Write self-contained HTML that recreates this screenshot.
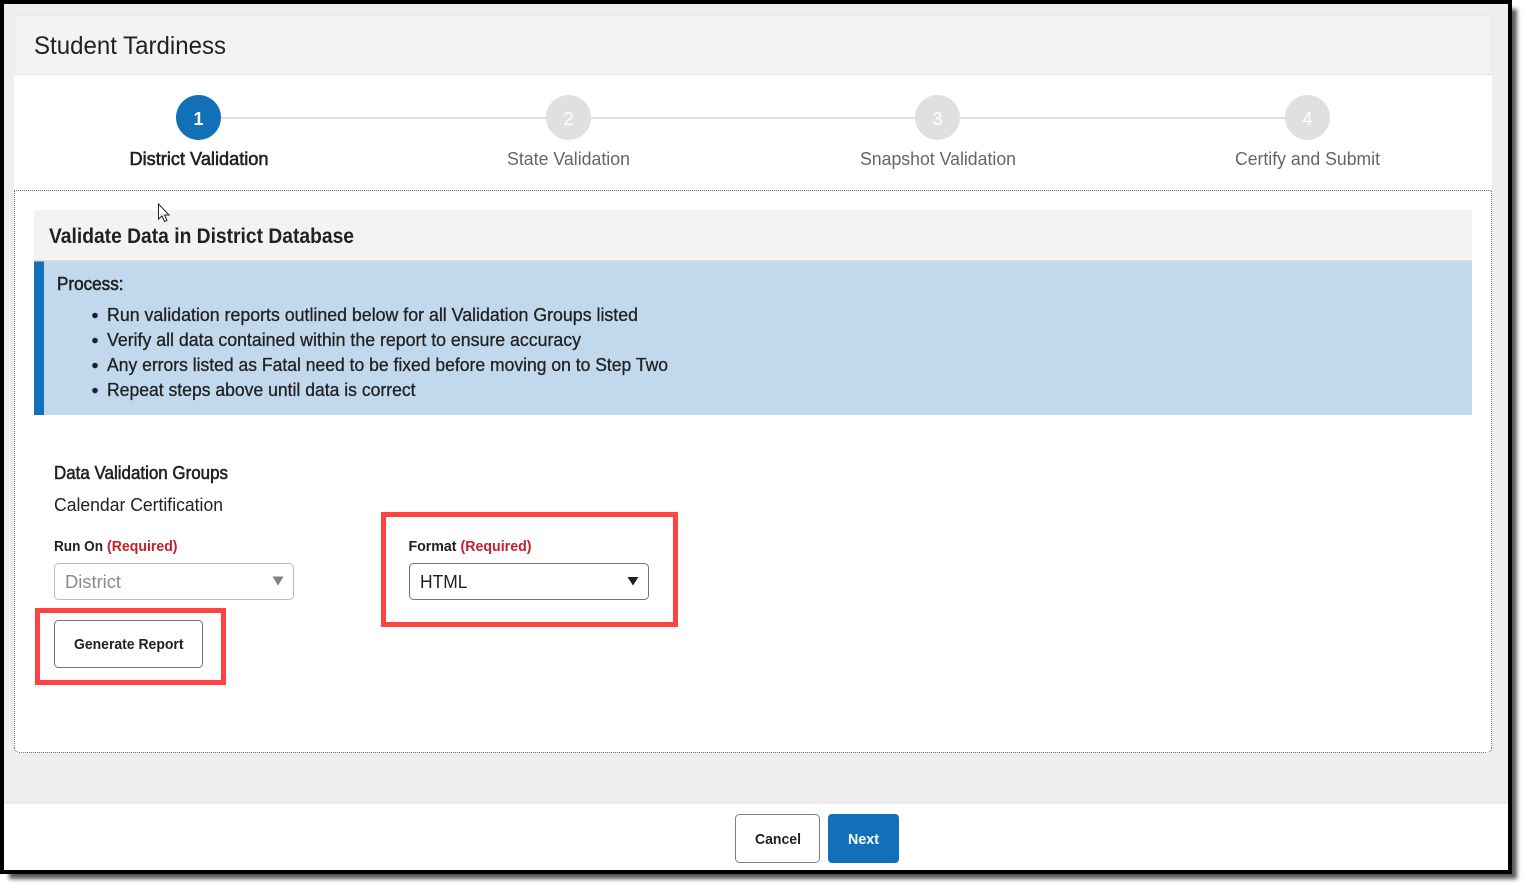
<!DOCTYPE html>
<html><head><meta charset="utf-8"><style>
html,body{margin:0;padding:0;background:#fff;width:1527px;height:889px;overflow:hidden}
svg{display:block}
text{font-family:"Liberation Sans",sans-serif;fill:#212121}
.b{font-weight:bold}
.g{fill:#666}
.r{fill:#c4202c}
.m{stroke:#212121;stroke-width:.55px}
.l{stroke:#212121;stroke-width:.28px}
.d{fill:none;stroke:#777;stroke-width:1;stroke-dasharray:1 1}
</style></head><body>
<svg width="1527" height="889" viewBox="0 0 1527 889" xmlns="http://www.w3.org/2000/svg">
<defs><filter id="s" x="-2%" y="-2%" width="104%" height="104%"><feGaussianBlur stdDeviation="2"/></filter></defs>
<rect x="9" y="9" width="1508" height="870" fill="#000" opacity=".65" filter="url(#s)"/>
<rect x="0" y="0" width="1512" height="874" fill="#000"/>
<rect x="4" y="4" width="1504" height="866" fill="#eeeeee"/>
<rect x="4" y="803" width="1504" height="67" fill="#fff"/>
<rect x="4" y="802.500" width="1504" height="1" fill="#e2e2e2"/>
<path d="M14.500 190.500V748a4 4 0 0 0 4 4H1487.500a4 4 0 0 0 4-4V190.500Z" fill="#fff"/>
<path class="d" d="M14 190.500H1492"/>
<path class="d" d="M14.500 191V748"/>
<path class="d" d="M1491.500 191V748"/>
<path class="d" d="M19 752.500H1487"/>
<path d="M14.500 748a4 4 0 0 0 4 4M1491.500 748a4 4 0 0 1-4 4" fill="none" stroke="#777" stroke-width="1" stroke-dasharray="1 1"/>
<path d="M14.500 74V19a4 4 0 0 1 4-4H1487.500a4 4 0 0 1 4 4V74" fill="#f3f3f3" stroke="#e6e6e6" stroke-width="1"/>
<rect x="14" y="75" width="1478" height="115" fill="#fff"/>
<rect x="14" y="74" width="1478" height="1" fill="#e4e4e4"/>
<text x="34" y="54" font-size="25" textLength="192" lengthAdjust="spacingAndGlyphs">Student Tardiness</text>
<rect x="221" y="117" width="1064" height="2" fill="#e0e0e0"/>
<circle cx="198.500" cy="117.500" r="22.500" fill="#1170b8"/>
<circle cx="568.500" cy="117.500" r="22.500" fill="#e0e0e0"/>
<circle cx="937.500" cy="117.500" r="22.500" fill="#e0e0e0"/>
<circle cx="1307.500" cy="117.500" r="22.500" fill="#e0e0e0"/>
<text x="198.500" y="125" font-size="18" text-anchor="middle" class="b" style="fill:#fff">1</text>
<text x="568.500" y="125" font-size="18" text-anchor="middle" style="fill:#fff">2</text>
<text x="937.500" y="125" font-size="18" text-anchor="middle" style="fill:#fff">3</text>
<text x="1307.500" y="125" font-size="18" text-anchor="middle" style="fill:#fff">4</text>
<text x="129.500" y="165" font-size="18" textLength="139" lengthAdjust="spacingAndGlyphs" class="m">District Validation</text>
<text x="507" y="165" font-size="18" textLength="123" lengthAdjust="spacingAndGlyphs" class="g">State Validation</text>
<text x="860" y="165" font-size="18" textLength="156" lengthAdjust="spacingAndGlyphs" class="g">Snapshot Validation</text>
<text x="1235" y="165" font-size="18" textLength="145" lengthAdjust="spacingAndGlyphs" class="g">Certify and Submit</text>
<rect x="34" y="210" width="1438" height="51" fill="#f3f3f3"/>
<rect x="34" y="260" width="1438" height="1.500" fill="#dcdcdc"/>
<text x="49" y="243" font-size="21" textLength="305" lengthAdjust="spacingAndGlyphs" class="b">Validate Data in District Database</text>
<rect x="34" y="261.500" width="1438" height="153.500" fill="#c1d8ed"/>
<rect x="34" y="261.500" width="10" height="153.500" fill="#1170b8"/>
<text x="57" y="290" font-size="18" textLength="66.500" lengthAdjust="spacingAndGlyphs" class="m">Process:</text>
<circle cx="95" cy="315.500" r="2.800" fill="#212121"/>
<circle cx="95" cy="340.500" r="2.800" fill="#212121"/>
<circle cx="95" cy="365.500" r="2.800" fill="#212121"/>
<circle cx="95" cy="390.500" r="2.800" fill="#212121"/>
<text x="107" y="321" font-size="18" textLength="531" lengthAdjust="spacingAndGlyphs" class="l">Run validation reports outlined below for all Validation Groups listed</text>
<text x="107" y="346" font-size="18" textLength="474" lengthAdjust="spacingAndGlyphs" class="l">Verify all data contained within the report to ensure accuracy</text>
<text x="107" y="371" font-size="18" textLength="561" lengthAdjust="spacingAndGlyphs" class="l">Any errors listed as Fatal need to be fixed before moving on to Step Two</text>
<text x="107" y="396" font-size="18" textLength="308.500" lengthAdjust="spacingAndGlyphs" class="l">Repeat steps above until data is correct</text>
<text x="54" y="479" font-size="18" textLength="174" lengthAdjust="spacingAndGlyphs" class="m">Data Validation Groups</text>
<text x="54" y="511" font-size="18" textLength="169" lengthAdjust="spacingAndGlyphs">Calendar Certification</text>
<text x="54" y="551" font-size="15" textLength="49" lengthAdjust="spacingAndGlyphs" class="b">Run On</text>
<text x="107" y="551" font-size="15" textLength="70.500" lengthAdjust="spacingAndGlyphs" class="b r">(Required)</text>
<rect x="54.500" y="563.500" width="239" height="36" rx="4" fill="#fff" stroke="#bdbdbd"/>
<text x="65" y="588" font-size="18" textLength="56" lengthAdjust="spacingAndGlyphs" style="fill:#8a8a8a">District</text>
<path d="M272.500 576.500h11l-5.500 9Z" fill="#808080"/>
<text x="408.500" y="551" font-size="15" textLength="48" lengthAdjust="spacingAndGlyphs" class="b">Format</text>
<text x="460.500" y="551" font-size="15" textLength="71" lengthAdjust="spacingAndGlyphs" class="b r">(Required)</text>
<rect x="409.500" y="563.500" width="239" height="36" rx="4" fill="#fff" stroke="#757575"/>
<text x="420" y="588" font-size="18" textLength="47.500" lengthAdjust="spacingAndGlyphs">HTML</text>
<path d="M627.500 577h11l-5.500 8.500Z" fill="#212121"/>
<rect x="54.500" y="620.500" width="148" height="47" rx="4" fill="#fff" stroke="#757575"/>
<text x="74" y="649" font-size="15" textLength="109.500" lengthAdjust="spacingAndGlyphs" class="b">Generate Report</text>
<rect x="37.500" y="610.500" width="186" height="72" fill="none" stroke="#ff4242" stroke-width="5"/>
<rect x="383.500" y="514.500" width="292" height="110" fill="none" stroke="#ff4242" stroke-width="5"/>
<rect x="735.500" y="814.500" width="84" height="48" rx="4" fill="#fff" stroke="#808080"/>
<text x="755" y="844" font-size="15" textLength="46" lengthAdjust="spacingAndGlyphs" class="b">Cancel</text>
<rect x="828" y="814" width="71" height="49" rx="4" fill="#1170b8"/>
<text x="848" y="844" font-size="15" textLength="31" lengthAdjust="spacingAndGlyphs" class="b" style="fill:#fff">Next</text>
<path d="M158.500 204V219l3.500-3 2.500 5.500 2.500-1-2.500-5.500h4.500Z" fill="#fff" stroke="#222" stroke-width="1"/>
</svg>
</body></html>
